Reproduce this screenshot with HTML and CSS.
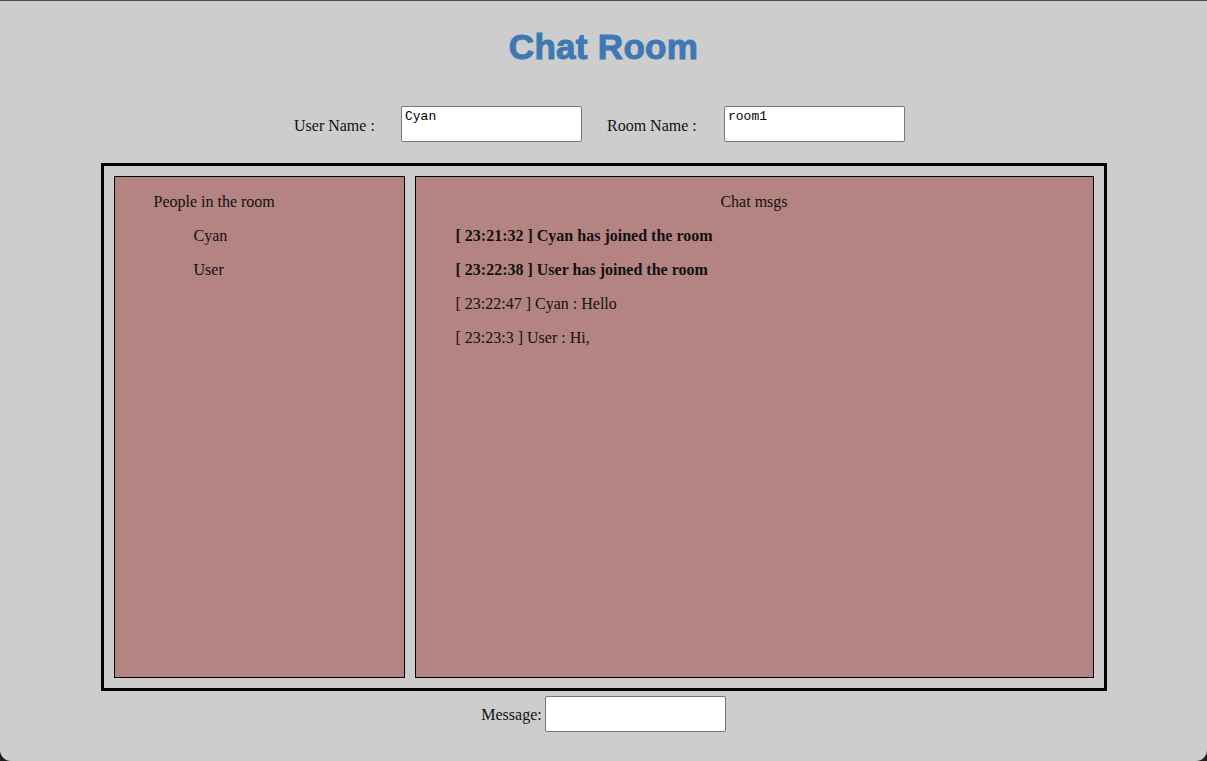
FILE: index.html
```html
<!DOCTYPE html>
<html lang="en">
<head>
    <meta charset="UTF-8">
    <title>Chat Room</title>
    <link rel="stylesheet" href="styles.css">
</head>
<body>
    <div class="window">
        <h1 class="title">Chat Room</h1>

        <div class="login">
            <label class="field-label user">User Name :</label>
            <textarea class="field" rows="1">Cyan</textarea>
            <label class="field-label room">Room Name :</label>
            <textarea class="field" rows="1">room1</textarea>
        </div>

        <div class="chat-box">
            <div class="panel people">
                <p class="panel-head">People in the room</p>
                <p class="person">Cyan</p>
                <p class="person">User</p>
            </div>
            <div class="panel msgs">
                <p class="panel-head center">Chat msgs</p>
                <p class="msg joined">[ 23:21:32 ] Cyan has joined the room</p>
                <p class="msg joined">[ 23:22:38 ] User has joined the room</p>
                <p class="msg">[ 23:22:47 ] Cyan : Hello</p>
                <p class="msg">[ 23:23:3 ] User : Hi,</p>
            </div>
        </div>

        <div class="send">
            <label class="send-label">Message:</label>
            <input class="send-input" type="text">
        </div>
    </div>
</body>
</html>
```

FILE: styles.css
```css
:root {
    --bg: #cdcdcd;
    --panel: #b48482;
    --title: #3e79b3;
    --txt: #111;
}

html {
    background: #1e1e1e;
}

body {
    margin: 0;
    font-family: "Liberation Serif", "Times New Roman", serif;
    font-size: 16px;
    color: var(--txt);
}

.window {
    box-sizing: border-box;
    height: 761px;
    background: var(--bg);
    border-top: 1px solid #4e4e4e;
    border-radius: 0 0 11px 11px;
    overflow: hidden;
}

.title {
    margin: 26px 0 39px;
    text-align: center;
    font-family: "Liberation Sans", Arial, sans-serif;
    font-size: 35px;
    line-height: 40px;
    font-weight: bold;
    letter-spacing: 0.3px;
    color: var(--title);
    -webkit-text-stroke: 1px var(--title);
}

.login {
    display: flex;
    justify-content: center;
    align-items: center;
    padding-right: 9px;
}

.field-label {
    padding-top: 3px;
    padding-left: 1px;
}

.field-label.user {
    width: 107px;
}

.field-label.room {
    width: 117px;
    margin-left: 24px;
}

.field {
    box-sizing: border-box;
    width: 181px;
    height: 36px;
    margin: 0;
    padding: 2px 3px;
    border: 1px solid #767676;
    border-radius: 2px;
    background: #fff;
    font-family: "Liberation Mono", "Courier New", monospace;
    font-size: 13px;
    line-height: 15px;
    resize: none;
    overflow: hidden;
}

.chat-box {
    box-sizing: border-box;
    width: 1006px;
    height: 528px;
    margin: 21px auto 0;
    padding: 10px;
    border: 3px solid #000;
    display: flex;
    gap: 10px;
}

.panel {
    box-sizing: border-box;
    height: 502px;
    background: var(--panel);
    border: 1px solid #000;
    padding: 0 39px;
}

.panel p {
    margin: 16px 0;
    line-height: 18px;
}

.people {
    width: 291px;
}

.msgs {
    width: 679px;
    padding: 0 40px;
}

.panel-head.center {
    text-align: center;
}

.person {
    padding-left: 40px;
}

.msg.joined {
    font-weight: bold;
}

.send {
    display: flex;
    justify-content: center;
    align-items: center;
    margin-top: 5px;
}

.send-label {
    margin-right: 3px;
    padding-top: 1px;
}

.send-input {
    box-sizing: border-box;
    width: 181px;
    height: 36px;
    margin: 0;
    border: 1px solid #767676;
    border-radius: 2px;
    background: #fff;
}
```
